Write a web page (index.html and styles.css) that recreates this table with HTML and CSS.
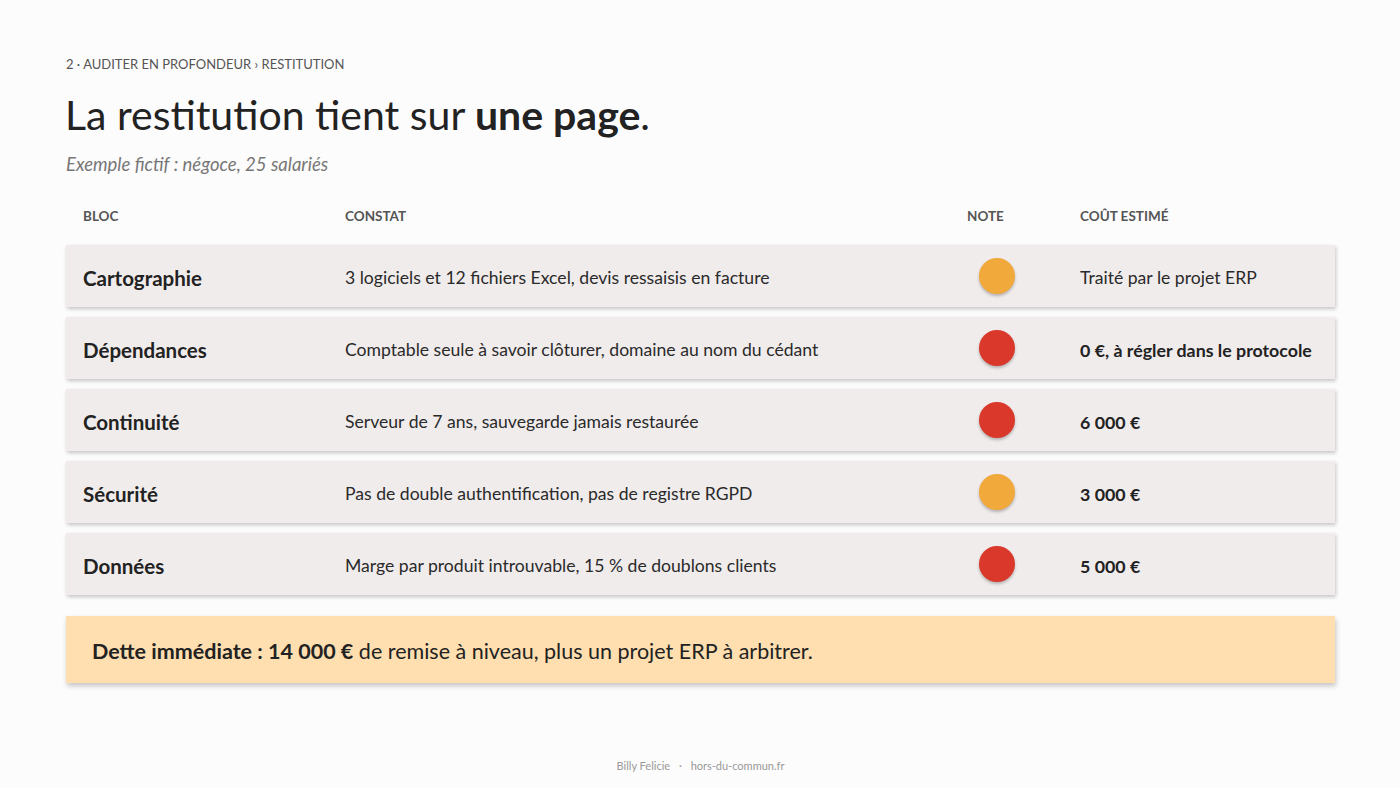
FILE: index.html
```html
<!DOCTYPE html>
<html lang="fr">
<head>
<meta charset="utf-8">
<title>Restitution</title>
<link rel="stylesheet" href="styles.css">
</head>
<body>
<main class="slide">
  <div class="crumb">2 · AUDITER EN PROFONDEUR › RESTITUTION</div>
  <h1 class="title">La restitution tient sur <strong>une page</strong>.</h1>
  <p class="subtitle">Exemple fictif : négoce, 25 salariés</p>

  <div class="table">
    <div class="head">
      <span>BLOC</span><span>CONSTAT</span><span>NOTE</span><span>COÛT ESTIMÉ</span>
    </div>
    <div class="row">
      <span class="bloc">Cartographie</span>
      <span class="constat">3 logiciels et 12 fichiers Excel, devis ressaisis en facture</span>
      <span class="note"><i class="dot orange"></i></span>
      <span class="cost">Traité par le projet ERP</span>
    </div>
    <div class="row">
      <span class="bloc">Dépendances</span>
      <span class="constat">Comptable seule à savoir clôturer, domaine au nom du cédant</span>
      <span class="note"><i class="dot red"></i></span>
      <span class="cost strong">0 €, à régler dans le protocole</span>
    </div>
    <div class="row">
      <span class="bloc">Continuité</span>
      <span class="constat">Serveur de 7 ans, sauvegarde jamais restaurée</span>
      <span class="note"><i class="dot red"></i></span>
      <span class="cost strong">6 000 €</span>
    </div>
    <div class="row">
      <span class="bloc">Sécurité</span>
      <span class="constat">Pas de double authentification, pas de registre RGPD</span>
      <span class="note"><i class="dot orange"></i></span>
      <span class="cost strong">3 000 €</span>
    </div>
    <div class="row">
      <span class="bloc">Données</span>
      <span class="constat">Marge par produit introuvable, 15 % de doublons clients</span>
      <span class="note"><i class="dot red"></i></span>
      <span class="cost strong">5 000 €</span>
    </div>
  </div>

  <div class="summary"><p><strong>Dette immédiate : 14 000 €</strong> de remise à niveau, plus un projet ERP à arbitrer.</p></div>

  <footer class="footer">Billy Felicie <span class="sep">·</span> hors-du-commun.fr</footer>
</main>
</body>
</html>
```

FILE: styles.css
```css
* { box-sizing: border-box; }
html, body { margin: 0; padding: 0; }
body {
  width: 1400px;
  height: 788px;
  background: #fdfcfc;
  font-family: "Lato", "Noto Sans", sans-serif;
  color: #222;
  overflow: hidden;
}
.slide {
  display: flex;
  flex-direction: column;
  padding: 56px 65px 0 66px;
  height: 788px;
}
.crumb {
  font-size: 13px;
  color: #555;
  line-height: 16px;
}
.title {
  margin: 18px 0 0 -1px;
  font-size: 41px;
  font-weight: 400;
  line-height: 50px;
  color: #222;
}
.title strong { font-weight: 700; }
.subtitle {
  margin: 13px 0 0;
  font-size: 18.5px;
  font-style: italic;
  color: #777;
  line-height: 22px;
}
.table {
  margin-top: 32px;
  display: flex;
  flex-direction: column;
  gap: 10px;
}
.head, .row {
  display: grid;
  grid-template-columns: 262px 622px 113px 1fr;
  align-items: center;
  padding-left: 17px;
}
.head {
  font-size: 13.5px;
  font-weight: 700;
  color: #555;
  height: 18px;
  margin-bottom: 10px;
}
.row {
  height: 62px;
  padding-top: 3px;
  background: #f1ecec;
  box-shadow: 1px 2px 4px rgba(0,0,0,0.22);
}
.bloc {
  font-size: 20.5px;
  font-weight: 700;
  color: #222;
}
.constat, .cost {
  font-size: 17.6px;
  color: #2a2a2a;
}
.cost.strong { font-weight: 700; font-size: 17.8px; color: #222; }
.note { display: flex; margin-top: -3px; }
.dot {
  display: block;
  width: 36px;
  height: 36px;
  border-radius: 50%;
  margin-left: 12px;
  box-shadow: 0 2px 3px rgba(0,0,0,0.25);
}
.dot.orange { background: #f2a93b; }
.dot.red { background: #d9382a; }
.summary {
  margin-top: 21px;
  height: 67px;
  background: #ffdfb0;
  box-shadow: 1px 3px 5px rgba(0,0,0,0.22);
  display: flex;
  align-items: center;
  padding: 3px 0 0 26px;
  font-size: 21.5px;
  color: #222;
}
.summary p { margin: 0; }
.summary strong { font-weight: 700; }
.footer {
  margin-top: auto;
  margin-bottom: 16px;
  text-align: center;
  font-size: 11px;
  color: #999;
}
.footer .sep { margin: 0 6px; }
```
